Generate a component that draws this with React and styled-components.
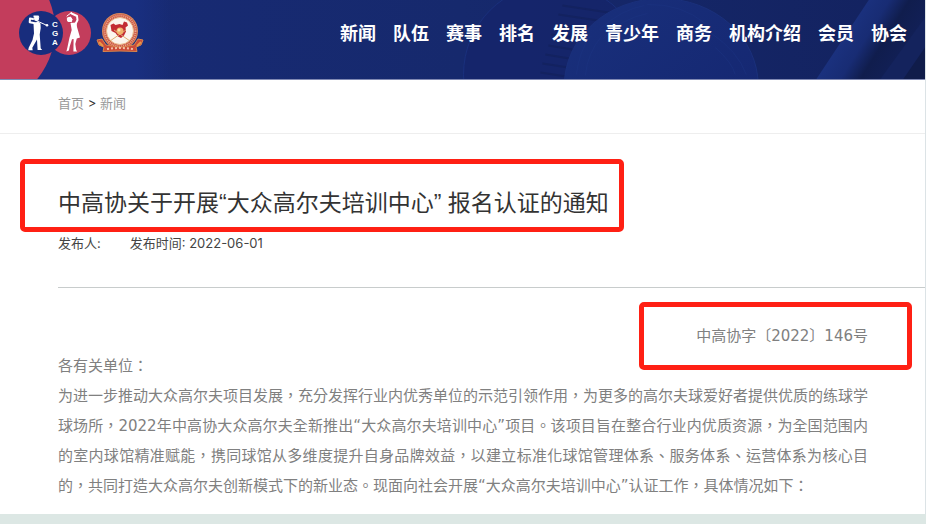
import React from 'react'
import styled, { createGlobalStyle } from 'styled-components'

const menu = ['新闻', '队伍', '赛事', '排名', '发展', '青少年', '商务', '机构介绍', '会员', '协会']

const App = () => {
    return (
        <>
            <GlobalStyle />
            <Page>
                <Header>
                    <Backdrop />
                    <Logos href="#home" aria-label="CGA">
                        <CgaLogo />
                        <Emblem />
                    </Logos>
                    <Nav>
                        {menu.map((item) => (
                            <NavLink key={item} href="#menu">{item}</NavLink>
                        ))}
                    </Nav>
                </Header>

                <Breadcrumb>
                    <a href="#home">首页</a> &gt; <a href="#news">新闻</a>
                </Breadcrumb>

                <Heading>
                    <Title>
                        中高协关于开展“大众高尔夫培训中心” 报名认证的通知
                        <Mark $left={38} $right={15} $top={28} $bottom={13} />
                    </Title>
                    <Meta>
                        <span>发布人:</span>
                        <span>发布时间: 2022-06-01</span>
                    </Meta>
                </Heading>

                <Article>
                    <DocNumber>
                        中高协字〔2022〕146号
                        <Mark $left={57} $right={44} $top={19} $bottom={19} />
                    </DocNumber>
                    <p>各有关单位：</p>
                    <p>
                        为进一步推动大众高尔夫项目发展，充分发挥行业内优秀单位的示范引领作用，为更多的高尔夫球爱好者提供优质的练球学球场所，2022年中高协大众高尔夫全新推出“大众高尔夫培训中心”项目。该项目旨在整合行业内优质资源，为全国范围内的室内球馆精准赋能，携同球馆从多维度提升自身品牌效益，以建立标准化球馆管理体系、服务体系、运营体系为核心目的，共同打造大众高尔夫创新模式下的新业态。现面向社会开展“大众高尔夫培训中心”认证工作，具体情况如下：
                    </p>
                </Article>
            </Page>
        </>
    )
}

const Backdrop = () => (
    <BackdropArt>
        <svg viewBox="0 0 926 80" preserveAspectRatio="xMaxYMid slice">
            <defs>
                <linearGradient id="sky" x1="0" x2="1">
                    <stop offset="0" stopColor="#182b76" />
                    <stop offset="0.5" stopColor="#16296d" />
                    <stop offset="1" stopColor="#13225f" />
                </linearGradient>
                <linearGradient id="ball" x1="0" x2="1" y1="0" y2="1">
                    <stop offset="0" stopColor="#19307c" />
                    <stop offset="1" stopColor="#14256f" />
                </linearGradient>
                <linearGradient id="shaft" gradientUnits="userSpaceOnUse" x1="844" y1="30" x2="902" y2="66">
                    <stop offset="0" stopColor="#1b3280" />
                    <stop offset="0.35" stopColor="#182c74" />
                    <stop offset="0.6" stopColor="#101d4d" />
                    <stop offset="1" stopColor="#122058" />
                </linearGradient>
            </defs>
            <rect width="926" height="80" fill="url(#sky)" />
            <circle cx="555" cy="75" r="91" fill="#15246b" stroke="#1d3588" strokeWidth="1" opacity="0.6" />
            <g stroke="#13225e" strokeWidth="2" opacity="0.8">
                <path d="M563 6l66 10M559 15l53 8M555 25l40 6M552 35l32 5M549 46l24 4M546 55l24 4M543 64l26 4M541 73l26 4" />
            </g>
            <ellipse cx="662" cy="86" rx="97" ry="87" fill="url(#ball)" stroke="#1a307b" strokeWidth="1" />
            <g fill="none" stroke="#1d3583" strokeWidth="1" opacity="0.5">
                <path d="M577 75q3-24 14-38M586 76q2-22 16-39M600 30q22-20 45-24M648 5q34-1 58 19M711 33q28 19 36 42M604 39q18-20 44-25M716 48q17 15 20 27" />
            </g>
            <path d="M817 80L870 0H926V80Z" fill="url(#shaft)" />
            <path d="M881 80L926 18V80Z" fill="#14235d" />
            <path d="M904 80L926 48V80Z" fill="#101c4a" />
        </svg>
        <svg viewBox="0 0 170 80" preserveAspectRatio="xMinYMid slice">
            <defs>
                <linearGradient id="brand" x1="0" x2="1">
                    <stop offset="0.8" stopColor="#192f80" />
                    <stop offset="1" stopColor="#192f80" stopOpacity="0" />
                </linearGradient>
            </defs>
            <rect width="170" height="80" fill="url(#brand)" />
            <circle cx="-23" cy="30" r="78" fill="#c33d5c" />
        </svg>
    </BackdropArt>
)

const CgaLogo = () => (
    <svg width="74" height="46" viewBox="18 10 74 46">
        <circle cx="69" cy="33" r="22" fill="#c33d5c" />
        <circle cx="41" cy="33" r="22" fill="#182d7d" />
        {/* man */}
        <g fill="none" stroke="#fff" strokeLinecap="round" strokeLinejoin="round">
            <path d="M36.500 23.500L29.700 22.200L30 18.500L33 19" strokeWidth="2" />
            <path d="M36 20.500L46 25" strokeWidth="1" />
        </g>
        <g fill="#fff">
            <circle cx="36.500" cy="18.500" r="2.500" />
            <path d="M33.500 15.500h5l1 2h-6z" />
            <path d="M33.500 23.500L38 21.500L40.500 23.500L40.700 28L39.700 34.500L40.700 48.300L42.200 50H37.600L37 39.500L32.300 47.700L32.700 50.200H28.200L28.700 47.800L32.500 40L34 33.500Z" />
            <circle cx="47" cy="25.300" r="1.300" />
        </g>
        {/* woman */}
        <g fill="none" stroke="#fff" strokeLinecap="round" strokeLinejoin="round">
            <path d="M71.300 13.300L77 16L77.500 20L75.500 24" strokeWidth="2" />
            <path d="M71.500 12.500L67 16" strokeWidth="1" />
        </g>
        <g fill="#fff">
            <circle cx="69.500" cy="19.500" r="2.600" />
            <path d="M66.500 18l4-1.500l2 3l-1 3z" />
            <path d="M70.500 23L76.500 22.500L77 27L80 37.500L76.800 38.500L75.300 44L76.200 50L77.200 51.500H73.400L73.600 39L72 39.200L69.700 46.500L68.900 50.500L66.400 51.500L67.400 47.500L69.400 38L71.700 30Z" />
        </g>
        <g fill="#fff" fontFamily="Liberation Sans, Arial, sans-serif" fontWeight="700" fontSize="8" textAnchor="middle">
            <text x="55" y="27">C</text>
            <text x="55" y="36">G</text>
            <text x="55" y="45">A</text>
        </g>
    </svg>
)

const Emblem = () => (
    <svg width="48" height="42" viewBox="96 12 48 42">
        <circle cx="120" cy="31" r="18" fill="#d98a5c" />
        <circle cx="120" cy="31" r="17" fill="#cc5a48" />
        <circle cx="120" cy="31" r="15.500" fill="none" stroke="#e8a88a" strokeWidth="2" strokeDasharray="1 1" />
        <circle cx="120" cy="31" r="13.500" fill="#fbf4ec" stroke="#e9b98a" strokeWidth="1" />
        <path d="M110.500 25l3-1.500l2 1.500l4-1l3 1l1.500-3.500l3 1l1 3l-2.500 2l.5 4l-2 4l-3 2.500l-3-1.500l-2.500-3.500l-4-2z" fill="#c32b32" />
        <path d="M110 41l16-11M130 41l-16-11" stroke="#dfae70" strokeWidth="1" />
        <circle cx="120" cy="31" r="3.500" fill="#f0b269" />
        <circle cx="119" cy="30" r="1.500" fill="#fbe6b1" />
        <path d="M97 40l5-1l4 6l14 2.500l14-2.500l4-6l5 1l-2 5l-5 2l1 4.500l-17-.500l-17 .500l1-4.500l-5-2z" fill="#cb4a38" stroke="#d9864c" strokeWidth="1" />
        <path d="M99 42l4 4M141 42l-4 4" stroke="#e89a4a" strokeWidth="2" />
        <path d="M107 49q13-2 26 0" fill="none" stroke="#f3c0a8" strokeWidth="2" strokeDasharray="2 2" />
    </svg>
)

const GlobalStyle = createGlobalStyle`
    * {
        box-sizing: border-box;
    }

    body {
        margin: 0;
        background-color: #dce7e4;
        font-family: Inter, "Noto Sans CJK SC", sans-serif;
    }

    h1, p {
        margin: 0;
    }

    a {
        text-decoration: none;
    }
`;

const Page = styled.div`
    background-color: white;
    border-right: 1px solid #dce3e6;
`;

const Header = styled.header`
    position: relative;
    display: flex;
    align-items: flex-start;
    justify-content: space-between;
    height: 80px;
    padding: 10px 18px 0;
    border-bottom: 1px solid #8089b3;
`;

const BackdropArt = styled.div`
    position: absolute;
    inset: 0;

    svg {
        position: absolute;
        top: 0;
        left: 0;
        width: 100%;
        height: 100%;
    }

    svg + svg {
        width: 170px;
    }
`;

const Logos = styled.a`
    position: relative;
    display: flex;
    align-items: flex-start;
    gap: 4px;

    svg {
        display: block;
    }

    svg + svg {
        margin-top: 2px;
    }
`;

const Nav = styled.nav`
    position: relative;
    display: flex;
    gap: 17px;
    padding-top: 12px;
`;

const NavLink = styled.a`
    color: white;
    font-size: 18px;
    font-weight: bold;
    line-height: 24px;
    white-space: nowrap;
`;

const Breadcrumb = styled.nav`
    padding: 13px 58px 20px;
    border-bottom: 1px solid #eeeeee;
    color: #333333;
    font-size: 13px;
    line-height: 20px;

    a {
        color: #999999;
    }
`;

const Heading = styled.div`
    margin-left: 58px;
    padding: 53px 0 34px;
    border-bottom: 1px solid #c8cccc;
`;

const Title = styled.h1`
    position: relative;
    width: fit-content;
    color: #333333;
    font-family: "Liberation Sans", "Noto Sans CJK SC", sans-serif;
    font-size: 23px;
    font-weight: normal;
    line-height: 32px;
`;

/* red frame drawn over the page */
const Mark = styled.span`
    position: absolute;
    top: -${(props) => props.$top}px;
    right: -${(props) => props.$right}px;
    bottom: -${(props) => props.$bottom}px;
    left: -${(props) => props.$left}px;
    border: 5px solid #ff2014;
    border-radius: 5px;
    pointer-events: none;
`;

const Meta = styled.div`
    display: flex;
    gap: 29px;
    margin-top: 14px;
    color: #444444;
    font-size: 13px;
    line-height: 20px;
`;

const Article = styled.article`
    padding: 33px 57px 13px 58px;
    color: #808080;
    font-family: "DejaVu Sans", "Noto Sans CJK TC", sans-serif;
    font-size: 15px;
    line-height: 30px;
    text-align: justify;
`;

const DocNumber = styled.p`
    position: relative;
    width: fit-content;
    margin-left: auto;
`;

export default App
